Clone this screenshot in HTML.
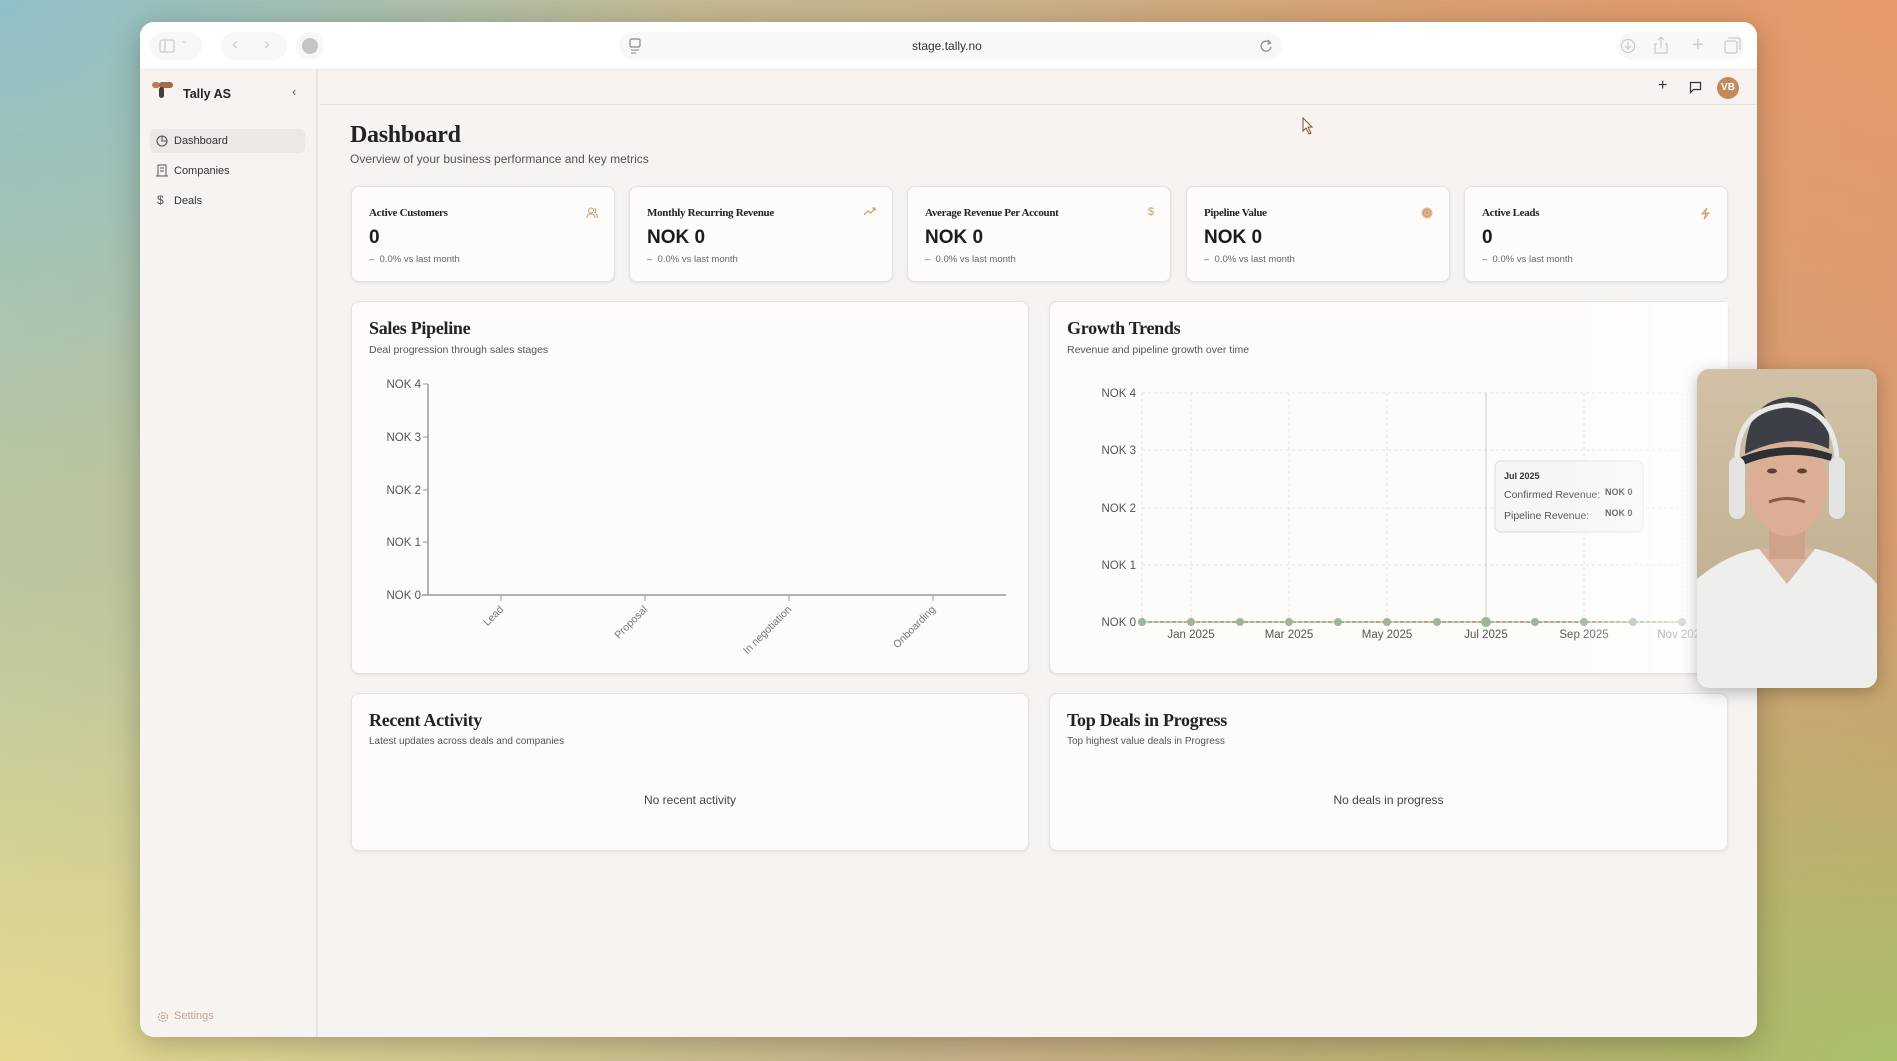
<!DOCTYPE html>
<html><head><meta charset="utf-8"><style>
*{box-sizing:border-box;margin:0;padding:0}
body{width:1897px;height:1061px;overflow:hidden;position:relative;font-family:"Liberation Sans",sans-serif;
background:
radial-gradient(ellipse 700px 500px at 0% 0%,#8fc0c8 0%,rgba(143,192,200,0) 100%),
radial-gradient(ellipse 900px 600px at 100% 0%,#e79a6a 0%,rgba(231,154,106,0) 100%),
radial-gradient(ellipse 900px 500px at 100% 100%,#a9c069 0%,rgba(169,192,105,0) 100%),
radial-gradient(ellipse 900px 500px at 0% 100%,#e6d98e 0%,rgba(230,217,142,0) 100%),
linear-gradient(90deg,#b9c6a0,#c9b48a 50%,#d39b72);}
.abs{position:absolute}
.win{left:140px;top:22px;width:1617px;height:1015px;border-radius:14px;background:#f6f3f1;overflow:hidden;box-shadow:0 6px 30px rgba(0,0,0,.25)}
.tb{left:0;top:0;width:100%;height:48px;background:#fff;border-bottom:1px solid #ebe8e6}
.side{left:0;top:48px;width:178px;height:967px;background:#f6f3f1;border-right:2px solid #e8e4e2}
.serif{font-family:"Liberation Serif",serif;font-weight:bold;color:#222;letter-spacing:-.3px}
.card{position:absolute;background:#fdfcfb;border:1px solid #e6e2df;border-radius:8px;box-shadow:0 1px 3px rgba(0,0,0,.08)}
.kl{position:absolute;left:17px;top:20px;font-size:11px}
.kv{position:absolute;left:17px;top:40px;font-size:19px;font-weight:bold;color:#1c1c1c}
.ks{position:absolute;left:17px;top:67px;font-size:9.5px;color:#666}
.ki{position:absolute;right:16px;top:20px}
.nav{position:absolute;left:10px;width:155px;height:24px;font-size:11px;color:#333;padding-left:24px;line-height:24px;border-radius:5px}
.sub{font-size:10.5px;color:#555}
</style></head><body>
<div class="abs win">
 <div class="abs tb">
  <div class="abs" style="left:10px;top:10px;width:52px;height:28px;border-radius:14px;background:#f7f7f7"></div>
  <svg class="abs" style="left:19px;top:17px" width="16" height="14"><rect x="1" y="1" width="14" height="12" rx="2" fill="none" stroke="#ccc" stroke-width="1.3"/><line x1="6" y1="1" x2="6" y2="13" stroke="#ccc" stroke-width="1.3"/></svg>
  <div class="abs" style="left:40px;top:13px;color:#ccc;font-size:10px">⌄</div>
  <div class="abs" style="left:81px;top:10px;width:66px;height:28px;border-radius:14px;background:#f7f7f7"></div>
  <div class="abs" style="left:92px;top:12px;color:#c8c8c8;font-size:17px">‹</div>
  <div class="abs" style="left:124px;top:12px;color:#c8c8c8;font-size:17px">›</div>
  <div class="abs" style="left:156px;top:10px;width:28px;height:28px;border-radius:14px;background:#f7f7f7"></div>
  <div class="abs" style="left:162px;top:16px;width:16px;height:16px;border-radius:8px;background:#c4c4c4"></div>
  <div class="abs" style="left:479px;top:10px;width:663px;height:28px;border-radius:14px;background:#f8f8f8"></div>
  <svg class="abs" style="left:488px;top:16px" width="14" height="16"><rect x="2" y="1" width="10" height="8" rx="1.5" fill="none" stroke="#888" stroke-width="1.2"/><line x1="3" y1="12" x2="11" y2="12" stroke="#888"/><line x1="3" y1="15" x2="8" y2="15" stroke="#888"/></svg>
  <div class="abs" style="left:772px;top:17px;font-size:12px;color:#333">stage.tally.no</div>
  <svg class="abs" style="left:1119px;top:17px" width="14" height="14"><path d="M11 4A5 5 0 1 0 12 8" fill="none" stroke="#888" stroke-width="1.2"/><path d="M9 1l2.5 3-3 1" fill="none" stroke="#888" stroke-width="1.2"/></svg>
  <div class="abs" style="left:1478px;top:10px;width:126px;height:28px;border-radius:14px;background:#f8f8f8"></div>
  <svg class="abs" style="left:1480px;top:16px" width="16" height="16"><circle cx="8" cy="8" r="6.5" fill="none" stroke="#ccc" stroke-width="1.3"/><path d="M8 4v7M5 8l3 3 3-3" fill="none" stroke="#ccc" stroke-width="1.3"/></svg>
  <svg class="abs" style="left:1514px;top:14px" width="14" height="18"><path d="M3 8H1v9h12V8h-2M7 1v11M4 4l3-3 3 3" fill="none" stroke="#ccc" stroke-width="1.3"/></svg>
  <div class="abs" style="left:1552px;top:12px;color:#ccc;font-size:20px">+</div>
  <svg class="abs" style="left:1584px;top:15px" width="17" height="17"><rect x="1" y="4" width="12" height="12" rx="2" fill="none" stroke="#ccc" stroke-width="1.3"/><path d="M4 1h10a2 2 0 0 1 2 2v10" fill="none" stroke="#ccc" stroke-width="1.3"/></svg>
 </div>
 <div class="abs side">
  <svg class="abs" style="left:12px;top:11px" width="22" height="18"><rect x="0" y="1" width="8" height="6" rx="3" fill="#c27d45"/><rect x="7" y="1" width="14" height="6" rx="3" fill="#a06b4a"/><rect x="7" y="6" width="5" height="11" rx="2.5" fill="#4a3b36"/></svg>
  <div class="abs" style="left:43px;top:17px;font-size:12.5px;font-weight:bold;color:#222">Tally AS</div>
  <div class="abs" style="left:152px;top:14px;color:#666;font-size:13px">‹</div>
  <div class="nav" style="top:59px;background:#ebe8e6">Dashboard</div>
  <svg class="abs" style="left:16px;top:65px" width="12" height="12"><circle cx="6" cy="6" r="5" fill="none" stroke="#555" stroke-width="1.1"/><path d="M6 1v5h5" fill="none" stroke="#555" stroke-width="1.1"/></svg>
  <div class="nav" style="top:89px">Companies</div>
  <svg class="abs" style="left:16px;top:94px" width="12" height="13"><rect x="2" y="1" width="8" height="11" fill="none" stroke="#555" stroke-width="1"/><path d="M4 4h4M4 7h4M0 12h12" stroke="#555"/></svg>
  <div class="nav" style="top:119px">Deals</div>
  <div class="abs" style="left:17px;top:123px;font-size:12px;color:#555">$</div>
  <div class="abs" style="left:34px;top:940px;font-size:11px;color:#c9a58e">Settings</div>
  <svg class="abs" style="left:17px;top:941px" width="12" height="12"><circle cx="6" cy="6" r="4.5" fill="none" stroke="#c9a58e" stroke-width="1.3" stroke-dasharray="2 1.2"/><circle cx="6" cy="6" r="1.8" fill="none" stroke="#c9a58e"/></svg>
 </div>
 <div class="abs" style="left:180px;top:82px;width:1437px;height:1px;background:#e3dfdc"></div>
 <div class="abs" style="left:1518px;top:55px;font-size:16px;color:#333">+</div>
 <svg class="abs" style="left:1549px;top:59px" width="13" height="13"><path d="M1.5 1.5h10v7h-7l-3 3z" fill="none" stroke="#333" stroke-width="1.2"/></svg>
 <div class="abs" style="left:1577px;top:55px;width:22px;height:22px;border-radius:11px;background:#c58a5a;color:#fff;font-size:10px;font-weight:bold;text-align:center;line-height:22px">VB</div>
 <svg class="abs" style="left:1162px;top:95px" width="12" height="18"><path d="M1 1v13l3-3 3 6 2-1-3-6h4z" fill="#fff" stroke="#8a4a2a" stroke-width="1"/></svg>

 <div class="abs serif" style="left:210px;top:100px;font-size:24px">Dashboard</div>
 <div class="abs" style="left:210px;top:130px;font-size:12px;color:#555">Overview of your business performance and key metrics</div>
</div>

<div class="card" style="left:351px;top:186px;width:264px;height:96px"><div class="kl serif">Active Customers</div><svg class="ki" width="12" height="12"><circle cx="5" cy="3.5" r="2.5" fill="none" stroke="#c99a6e"/><path d="M1 11c0-3 2-4 4-4s4 1 4 4M8 1.5a2.3 2.3 0 0 1 0 4.5M10 7c1 .5 1.5 2 1.5 4" fill="none" stroke="#c99a6e"/></svg><div class="kv">0</div><div class="ks">– &nbsp;0.0% vs last month</div></div>
<div class="card" style="left:629px;top:186px;width:264px;height:96px"><div class="kl serif">Monthly Recurring Revenue</div><svg class="ki" width="13" height="10"><path d="M1 8l4-4 3 2 4-5M9 1h3v3" fill="none" stroke="#c99a6e" stroke-width="1.1"/></svg><div class="kv">NOK 0</div><div class="ks">– &nbsp;0.0% vs last month</div></div>
<div class="card" style="left:907px;top:186px;width:264px;height:96px"><div class="kl serif">Average Revenue Per Account</div><div class="ki" style="color:#c99a6e;font-size:11px;top:19px">$</div><div class="kv">NOK 0</div><div class="ks">– &nbsp;0.0% vs last month</div></div>
<div class="card" style="left:1186px;top:186px;width:264px;height:96px"><div class="kl serif">Pipeline Value</div><svg class="ki" width="12" height="12"><circle cx="6" cy="6" r="5.5" fill="#e2bc98"/><circle cx="6" cy="6" r="3.5" fill="none" stroke="#c99a6e"/><circle cx="6" cy="6" r="1.5" fill="#c99a6e"/></svg><div class="kv">NOK 0</div><div class="ks">– &nbsp;0.0% vs last month</div></div>
<div class="card" style="left:1464px;top:186px;width:264px;height:96px"><div class="kl serif">Active Leads</div><svg class="ki" width="11" height="13"><path d="M7 1L2 7h4l-2 5 5-6H5z" fill="none" stroke="#c99a6e"/></svg><div class="kv">0</div><div class="ks">– &nbsp;0.0% vs last month</div></div>

<div class="card" style="left:351px;top:301px;width:678px;height:373px">
 <div class="abs serif" style="left:17px;top:16px;font-size:18px">Sales Pipeline</div>
 <div class="abs sub" style="left:17px;top:42px">Deal progression through sales stages</div>
</div>
<svg class="abs" style="left:351px;top:301px" width="678" height="373" font-family="Liberation Sans" font-size="11.5" fill="#555">
 <line x1="77" y1="83" x2="77" y2="294" stroke="#999" stroke-width="1.5"/>
 <line x1="71" y1="294" x2="655" y2="294" stroke="#999" stroke-width="1.5"/>
 <g stroke="#999"><line x1="72" y1="83" x2="77" y2="83"/><line x1="72" y1="136" x2="77" y2="136"/><line x1="72" y1="189" x2="77" y2="189"/><line x1="72" y1="241" x2="77" y2="241"/>
 <line x1="150" y1="294" x2="150" y2="300"/><line x1="294" y1="294" x2="294" y2="300"/><line x1="438" y1="294" x2="438" y2="300"/><line x1="582" y1="294" x2="582" y2="300"/></g>
 <g text-anchor="end"><text x="70" y="87">NOK 4</text><text x="70" y="140">NOK 3</text><text x="70" y="193">NOK 2</text><text x="70" y="245">NOK 1</text><text x="70" y="298">NOK 0</text></g>
 <g text-anchor="end" font-size="10.5" fill="#777"><text transform="translate(153,309) rotate(-45)">Lead</text><text transform="translate(297,309) rotate(-45)">Proposal</text><text transform="translate(441,309) rotate(-45)">In negotiation</text><text transform="translate(585,309) rotate(-45)">Onboarding</text></g>
</svg>

<div class="card" style="left:1049px;top:301px;width:679px;height:373px">
 <div class="abs serif" style="left:17px;top:16px;font-size:18px">Growth Trends</div>
 <div class="abs sub" style="left:17px;top:42px">Revenue and pipeline growth over time</div>
</div>
<svg class="abs" style="left:1049px;top:301px" width="679" height="373" font-family="Liberation Sans" font-size="11.5" fill="#555">
 <g stroke="#e6e3e0" stroke-dasharray="3 3"><line x1="93" y1="92" x2="633" y2="92"/><line x1="93" y1="149" x2="633" y2="149"/><line x1="93" y1="207" x2="633" y2="207"/><line x1="93" y1="264" x2="633" y2="264"/>
 <line x1="93" y1="92" x2="93" y2="321"/><line x1="142" y1="92" x2="142" y2="321"/><line x1="240" y1="92" x2="240" y2="321"/><line x1="338" y1="92" x2="338" y2="321"/><line x1="535" y1="92" x2="535" y2="321"/><line x1="633" y1="92" x2="633" y2="321"/></g>
 <line x1="437" y1="92" x2="437" y2="321" stroke="#ccc"/>
 <g text-anchor="end"><text x="87" y="96">NOK 4</text><text x="87" y="153">NOK 3</text><text x="87" y="211">NOK 2</text><text x="87" y="268">NOK 1</text><text x="87" y="325">NOK 0</text></g>
 <line x1="93" y1="321" x2="633" y2="321" stroke="#c7a77f" stroke-width="2" stroke-dasharray="4 2"/>
 <line x1="93" y1="321" x2="633" y2="321" stroke="#97ad8f" stroke-width="1" />
 <g fill="#9db598"><circle cx="93" cy="321" r="4"/><circle cx="142" cy="321" r="4"/><circle cx="191" cy="321" r="4"/><circle cx="240" cy="321" r="4"/><circle cx="289" cy="321" r="4"/><circle cx="338" cy="321" r="4"/><circle cx="388" cy="321" r="4"/><circle cx="437" cy="321" r="5"/><circle cx="486" cy="321" r="4"/><circle cx="535" cy="321" r="4"/><circle cx="584" cy="321" r="4"/><circle cx="633" cy="321" r="4" fill="#999"/></g>
 <g text-anchor="middle"><text x="142" y="337">Jan 2025</text><text x="240" y="337">Mar 2025</text><text x="338" y="337">May 2025</text><text x="437" y="337">Jul 2025</text><text x="535" y="337">Sep 2025</text><text x="633" y="337">Nov 2025</text></g>
 <rect x="446" y="160" width="148" height="71" rx="6" fill="#f8f6f4" stroke="#ddd"/>
 <text x="455" y="178" font-size="9" font-weight="bold" fill="#333">Jul 2025</text>
 <text x="455" y="197" font-size="10.5">Confirmed Revenue:</text><text x="556" y="194" font-size="9" font-weight="bold" fill="#333">NOK 0</text>
 <text x="455" y="218" font-size="10.5">Pipeline Revenue:</text><text x="556" y="215" font-size="9" font-weight="bold" fill="#333">NOK 0</text>
</svg>
<div class="abs" style="left:1560px;top:302px;width:168px;height:371px;background:linear-gradient(90deg,rgba(255,255,255,0),rgba(255,255,255,.9))"></div>

<div class="card" style="left:351px;top:693px;width:678px;height:158px">
 <div class="abs serif" style="left:17px;top:16px;font-size:18px">Recent Activity</div>
 <div class="abs sub" style="left:17px;top:42px;font-size:10px">Latest updates across deals and companies</div>
 <div class="abs" style="left:0;width:100%;top:99px;text-align:center;font-size:12px;color:#444">No recent activity</div>
</div>
<div class="card" style="left:1049px;top:693px;width:679px;height:158px">
 <div class="abs serif" style="left:17px;top:16px;font-size:18px">Top Deals in Progress</div>
 <div class="abs sub" style="left:17px;top:42px;font-size:10px">Top highest value deals in Progress</div>
 <div class="abs" style="left:0;width:100%;top:99px;text-align:center;font-size:12px;color:#444">No deals in progress</div>
</div>

<div class="abs" style="left:1697px;top:369px;width:180px;height:319px;border-radius:12px;overflow:hidden;background:linear-gradient(180deg,#d2c1a6,#c3b495 60%,#b9ab8a);box-shadow:0 4px 16px rgba(0,0,0,.25)">
 <svg width="180" height="319">
  <path d="M0 210 Q30 185 60 180 L120 180 Q160 190 180 215 V319 H0Z" fill="#eeeeec"/>
  <path d="M62 180 L90 215 L118 180Z" fill="#d9b4a0"/>
  <rect x="72" y="150" width="36" height="40" fill="#cfa28c"/>
  <ellipse cx="90" cy="115" rx="40" ry="52" fill="#dcae96"/>
  <path d="M48 85 Q50 30 95 28 Q135 30 132 80 Q95 62 48 85Z" fill="#3c4046"/>
  <path d="M44 88 Q90 70 135 85 L134 92 Q90 78 46 96Z" fill="#2c2f33"/>
  <path d="M40 95 Q38 40 90 36 Q140 40 140 95" fill="none" stroke="#e8e8e8" stroke-width="5"/>
  <rect x="32" y="88" width="16" height="62" rx="8" fill="#e4e4e4"/>
  <rect x="132" y="88" width="16" height="62" rx="8" fill="#e4e4e4"/>
  <path d="M72 133 Q90 126 108 133" fill="none" stroke="#8a5a46" stroke-width="3"/>
  <ellipse cx="75" cy="102" rx="5" ry="2.5" fill="#5a4036"/><ellipse cx="105" cy="102" rx="5" ry="2.5" fill="#5a4036"/>
 </svg>
</div>
</body></html>
